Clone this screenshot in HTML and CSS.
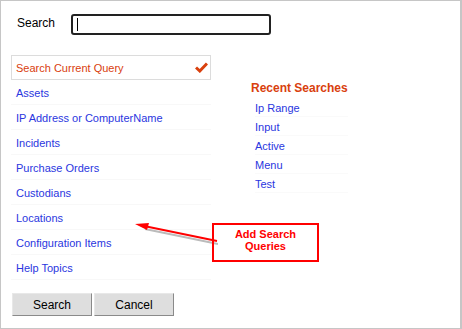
FILE: index.html
```html
<!DOCTYPE html>
<html lang="en">
<head>
    <meta charset="UTF-8">
    <title>Search</title>
    <link rel="stylesheet" href="styles.css">
</head>
<body>

    <div class="frame">
        <!-- Search Row -->
        <div class="search-row">
            <label class="search-label" for="q">Search</label>
            <div class="search-input"><span class="caret"></span></div>
        </div>

        <!-- Query Lists -->
        <div class="columns">
            <ul class="query-list">
                <li class="current">
                    <span>Search Current Query</span>
                    <svg class="check" width="13" height="11" viewBox="0 0 13 11">
                        <path d="M1 5.5 L4.8 9 L12 1.5" fill="none" stroke="#d9400e" stroke-width="3"/>
                    </svg>
                </li>
                <li><a href="#">Assets</a></li>
                <li><a href="#">IP Address or ComputerName</a></li>
                <li><a href="#">Incidents</a></li>
                <li><a href="#">Purchase Orders</a></li>
                <li><a href="#">Custodians</a></li>
                <li><a href="#">Locations</a></li>
                <li><a href="#">Configuration Items</a></li>
                <li><a href="#">Help Topics</a></li>
            </ul>

            <div class="recent">
                <div class="recent-title">Recent Searches</div>
                <ul class="recent-list">
                    <li><a href="#">Ip Range</a></li>
                    <li><a href="#">Input</a></li>
                    <li><a href="#">Active</a></li>
                    <li><a href="#">Menu</a></li>
                    <li><a href="#">Test</a></li>
                </ul>
            </div>
        </div>

        <!-- Buttons -->
        <div class="buttons">
            <button type="button">Search</button>
            <button type="button">Cancel</button>
        </div>

        <!-- Annotation -->
        <svg class="arrow" width="84" height="24" viewBox="0 0 84 24">
            <line x1="83" y1="20" x2="10" y2="5" stroke="#bbb" stroke-width="2" transform="translate(1,2)"/>
            <line x1="83" y1="19" x2="10" y2="4" stroke="#ff0000" stroke-width="2"/>
            <path d="M1 2 L15 1 L13 8 Z" fill="#ff0000"/>
        </svg>
        <div class="note">Add Search<br>Queries</div>
    </div>

</body>
</html>
```

FILE: styles.css
```css
/* General Styles */
body {
    margin: 0;
    font-family: 'Liberation Sans', Arial, sans-serif;
    font-size: 11px;
    color: #000;
    background-color: #fff;
}

.frame {
    position: relative;
    width: 462px;
    height: 329px;
    box-sizing: border-box;
    border: 1px solid #c6c6c6;
    border-right-width: 2px;
    padding: 13px 0 0 10px;
}

/* Search Row */
.search-row {
    display: flex;
    align-items: center;
}

.search-label {
    width: 54px;
    padding-left: 6px;
    padding-bottom: 4px;
    font-size: 12px;
}

.search-input {
    width: 192px;
    height: 17px;
    border: 2px solid #222;
    border-radius: 3px;
    display: flex;
    align-items: center;
    padding-left: 4px;
}

.caret {
    width: 1px;
    height: 13px;
    background: #000;
}

/* Columns */
.columns {
    display: flex;
    margin-top: 20px;
}

.query-list {
    list-style: none;
    margin: 0;
    padding: 0;
    width: 200px;
}

.query-list li {
    height: 24px;
    display: flex;
    align-items: center;
    padding-left: 5px;
    padding-top: 2px;
    box-sizing: border-box;
    height: 25px;
    border-bottom: 1px solid #f8f8f8;
}

.query-list li.current {
    height: 25px;
    padding-top: 0;
    border: 1px solid #dcdcdc;
    padding-left: 4px;
    padding-right: 2px;
    justify-content: space-between;
    color: #d9400e;
}

.query-list a,
.recent-list a {
    color: #2a36e0;
    text-decoration: none;
}

.recent {
    margin-left: 40px;
    margin-top: 24px;
}

.recent-title {
    color: #d9400e;
    font-weight: bold;
    font-size: 12px;
    height: 19px;
    line-height: 19px;
}

.recent-list {
    list-style: none;
    margin: 0;
    padding: 0 0 0 4px;
}

.recent-list li {
    height: 18px;
    line-height: 20px;
    border-bottom: 1px solid #fafafa;
}

/* Buttons */
.buttons {
    display: flex;
    gap: 2px;
    margin-top: 13px;
    padding-left: 1px;
}

.buttons button {
    width: 80px;
    height: 23px;
    font-family: inherit;
    font-size: 12px;
    background-color: #dedede;
    border: 1px solid #e8e8e8;
    border-right-color: #8a8a8a;
    border-bottom-color: #8a8a8a;
    padding: 0;
}

/* Annotation */
.arrow {
    position: absolute;
    left: 133px;
    top: 221px;
}

.note {
    position: absolute;
    left: 211px;
    top: 222px;
    width: 103px;
    height: 32px;
    border: 2px solid #ff0000;
    color: #ff0000;
    font-size: 11px;
    font-weight: bold;
    text-align: center;
    line-height: 12px;
    padding-top: 3px;
    box-sizing: content-box;
}
```
